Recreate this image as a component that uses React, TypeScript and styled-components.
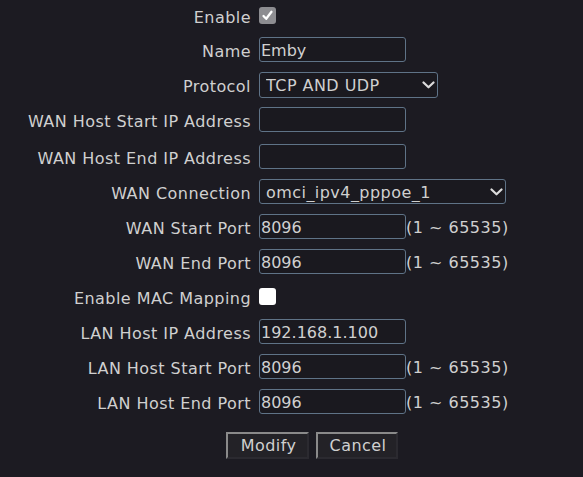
import React from "react";
import styled, { createGlobalStyle } from "styled-components";

const Global = createGlobalStyle`
  html, body { margin: 0; padding: 0; background: #1c1b22; }
  body { font-family: "DejaVu Sans", Verdana, sans-serif; font-size: 16px; color: #d0d0d0; }
`;

const Form = styled.div`
  display: flex;
  flex-direction: column;
  margin-top: -1px;
`;

const Row = styled.div<{ $h?: number; $mt?: number }>`
  display: grid;
  grid-template-columns: 251px auto;
  column-gap: 8px;
  align-items: center;
  height: ${(p) => p.$h ?? 35}px;
  margin-top: ${(p) => p.$mt ?? 0}px;
`;

const Label = styled.div`
  text-align: right;
  white-space: nowrap;
  letter-spacing: 0.45px;
  padding-top: 3px;
`;

const Cell = styled.div`
  display: flex;
  align-items: center;
`;

const TextInput = styled.input<{ $w?: number }>`
  box-sizing: border-box;
  width: ${(p) => p.$w ?? 147}px;
  height: 25px;
  margin: 0;
  padding: 2px 1px 0 1px;
  background: #1a191f;
  border: 1px solid #5f7387;
  border-radius: 3px;
  color: #d0d0d0;
  font-family: inherit;
  font-size: 16px;
  outline: none;
`;

const SelectWrap = styled.div<{ $w: number; $h: number }>`
  position: relative;
  width: ${(p) => p.$w}px;
  height: ${(p) => p.$h}px;
`;

const Select = styled.select`
  appearance: none;
  -webkit-appearance: none;
  box-sizing: border-box;
  width: 100%;
  height: 100%;
  margin: 0;
  padding: 1px 0 0 6px;
  background: #1a191f;
  border: 1px solid #5f7387;
  border-radius: 3px;
  color: #d0d0d0;
  font-family: inherit;
  font-size: 16px;
  letter-spacing: 0.45px;
  outline: none;
`;

const Chevron = styled.svg`
  position: absolute;
  right: 3px;
  top: 9px;
  width: 13px;
  height: 8px;
  pointer-events: none;
`;

const Check = styled.span<{ $on: boolean }>`
  box-sizing: border-box;
  width: 17px;
  height: 17px;
  border-radius: 3px;
  background: ${(p) => (p.$on ? "#8d8d91" : "#ffffff")};
  display: flex;
  align-items: center;
  justify-content: center;
`;

const Range = styled.span`
  white-space: nowrap;
  letter-spacing: 0.5px;
  padding-top: 2px;
`;

const Buttons = styled.div`
  display: flex;
  gap: 7px;
  padding-left: 226px;
  margin-top: 13px;
`;

const Button = styled.button<{ $w: number }>`
  box-sizing: border-box;
  width: ${(p) => p.$w}px;
  height: 27px;
  margin: 0;
  padding: 0 0 0 2px;
  background: #232227;
  color: #d0d0d0;
  font-family: inherit;
  font-size: 16px;
  letter-spacing: 0.45px;
  border: 2px solid;
  border-color: #8a8a8a #2b2a30 #2b2a30 #8a8a8a;
  border-radius: 0;
`;

function SelectBox({ w, h, value }: { w: number; h: number; value: string }) {
  return (
    <SelectWrap $w={w} $h={h}>
      <Select defaultValue={value}>
        <option>{value}</option>
      </Select>
      <Chevron viewBox="0 0 13 8">
        <path d="M1.5 1.5 L6.5 6.3 L11.5 1.5" fill="none" stroke="#dcdcdc" strokeWidth="2.2" strokeLinecap="round" strokeLinejoin="round" />
      </Chevron>
    </SelectWrap>
  );
}

function CheckBox({ on }: { on: boolean }) {
  return (
    <Check $on={on}>
      {on && (
        <svg width="13" height="13" viewBox="0 0 13 13">
          <path d="M2.5 7 L5.2 9.8 L10.5 2.8" fill="none" stroke="#ffffff" strokeWidth="2.3" strokeLinecap="round" strokeLinejoin="round" />
        </svg>
      )}
    </Check>
  );
}

const PortRange = () => <Range>(1 ~ 65535)</Range>;

export default function App() {
  return (
    <>
      <Global />
      <Form>
        <Row $h={33}>
          <Label>Enable</Label>
          <Cell><CheckBox on /></Cell>
        </Row>
        <Row>
          <Label>Name</Label>
          <Cell><TextInput defaultValue="Emby" /></Cell>
        </Row>
        <Row>
          <Label>Protocol</Label>
          <Cell><SelectBox w={179} h={26} value="TCP AND UDP" /></Cell>
        </Row>
        <Row>
          <Label>WAN Host Start IP Address</Label>
          <Cell><TextInput defaultValue="" /></Cell>
        </Row>
        <Row $mt={2}>
          <Label>WAN Host End IP Address</Label>
          <Cell><TextInput defaultValue="" /></Cell>
        </Row>
        <Row>
          <Label>WAN Connection</Label>
          <Cell><SelectBox w={247} h={25} value="omci_ipv4_pppoe_1" /></Cell>
        </Row>
        <Row>
          <Label>WAN Start Port</Label>
          <Cell><TextInput defaultValue="8096" /><PortRange /></Cell>
        </Row>
        <Row>
          <Label>WAN End Port</Label>
          <Cell><TextInput defaultValue="8096" /><PortRange /></Cell>
        </Row>
        <Row>
          <Label>Enable MAC Mapping</Label>
          <Cell><CheckBox on={false} /></Cell>
        </Row>
        <Row>
          <Label>LAN Host IP Address</Label>
          <Cell><TextInput defaultValue="192.168.1.100" /></Cell>
        </Row>
        <Row>
          <Label>LAN Host Start Port</Label>
          <Cell><TextInput defaultValue="8096" /><PortRange /></Cell>
        </Row>
        <Row>
          <Label>LAN Host End Port</Label>
          <Cell><TextInput defaultValue="8096" /><PortRange /></Cell>
        </Row>
      </Form>
      <Buttons>
        <Button $w={83}>Modify</Button>
        <Button $w={82}>Cancel</Button>
      </Buttons>
    </>
  );
}
